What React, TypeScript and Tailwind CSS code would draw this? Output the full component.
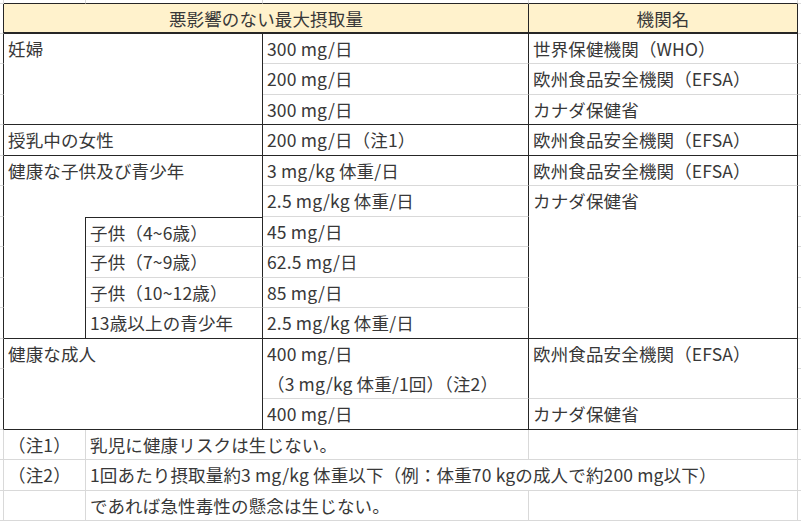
import React from "react";

const base =
  "border-r border-b border-[#d9d9d9] pl-1 leading-[30px] whitespace-nowrap overflow-visible";

const aRows = [
  "row-start-1",
  "row-start-2",
  "row-start-3",
  "row-start-4",
  "row-start-5",
  "row-start-6",
  "row-start-7",
  "row-start-8",
  "row-start-9",
  "row-start-10",
  "row-start-11",
  "row-start-12",
  "row-start-13",
  "row-start-14",
  "row-start-15",
  "row-start-16",
  "row-start-17",
  "row-start-18",
];

export default function App() {
  return (
    <div className="w-[801px] h-[522px] overflow-hidden bg-white text-[#383838] font-['Noto_Sans_CJK_JP','Noto_Sans',sans-serif] text-[17.5px] tracking-[0.15px]">
      <div className="grid grid-cols-[4px_82px_177px_266px_269px_1fr] grid-rows-[4px_30px_30px_31px_30px_31px_30px_31px_30px_31px_30px_31px_30px_30px_31px_30px_31px_30px]">
        {/* Column A */}
        {aRows.map((r, i) => (
          <div
            key={"a" + i}
            className={`col-start-1 ${r} border-r border-b border-[#d9d9d9] ${
              i >= 1 && i <= 14 ? "border-r-[#262626]" : ""
            }`}
          />
        ))}
        {/* Column F */}
        {aRows.map((r, i) => (
          <div key={"f" + i} className={`col-start-6 ${r} border-b border-[#d9d9d9]`} />
        ))}

        {/* Row 1 spacer */}
        <div className="col-start-2 row-start-1 border-r border-b border-[#d9d9d9] border-b-[#262626]" />
        <div className="col-start-3 row-start-1 border-r border-b border-[#d9d9d9] border-b-[#262626]" />
        <div className="col-start-4 row-start-1 border-r border-b border-[#d9d9d9] border-b-[#262626]" />
        <div className="col-start-5 row-start-1 border-r border-b border-[#d9d9d9] border-b-[#262626]" />

        {/* Header */}
        <div className="col-start-2 col-span-3 row-start-2 bg-[#fff2cc] border-r border-b-2 border-[#262626] text-center leading-[29px]">
          悪影響のない最大摂取量
        </div>
        <div className="col-start-5 row-start-2 bg-[#fff2cc] border-r border-b-2 border-[#262626] text-center leading-[29px]">
          機関名
        </div>

        {/* 妊婦 */}
        <div className={`col-start-2 col-span-2 row-start-3 row-span-3 ${base} border-r-[#262626] border-b-[#262626]`}>
          妊婦
        </div>
        <div className={`col-start-4 row-start-3 ${base} border-r-[#262626]`}>300 mg/日</div>
        <div className={`col-start-4 row-start-4 ${base} border-r-[#262626]`}>200 mg/日</div>
        <div className={`col-start-4 row-start-5 ${base} border-r-[#262626] border-b-[#262626]`}>300 mg/日</div>
        <div className={`col-start-5 row-start-3 ${base} border-r-[#262626]`}>世界保健機関（WHO）</div>
        <div className={`col-start-5 row-start-4 ${base} border-r-[#262626]`}>欧州食品安全機関（EFSA）</div>
        <div className={`col-start-5 row-start-5 ${base} border-r-[#262626] border-b-[#262626]`}>カナダ保健省</div>

        {/* 授乳中の女性 */}
        <div className={`col-start-2 col-span-2 row-start-6 ${base} border-r-[#262626] border-b-[#262626]`}>
          授乳中の女性
        </div>
        <div className={`col-start-4 row-start-6 ${base} border-r-[#262626] border-b-[#262626]`}>200 mg/日（注1）</div>
        <div className={`col-start-5 row-start-6 ${base} border-r-[#262626] border-b-[#262626]`}>欧州食品安全機関（EFSA）</div>

        {/* 健康な子供及び青少年 */}
        <div className={`col-start-2 col-span-2 row-start-7 row-span-2 ${base} border-r-[#262626] border-b-0`}>
          健康な子供及び青少年
        </div>
        <div className={`col-start-4 row-start-7 ${base} border-r-[#262626]`}>3 mg/kg 体重/日</div>
        <div className={`col-start-4 row-start-8 ${base} border-r-[#262626]`}>2.5 mg/kg 体重/日</div>
        <div className={`col-start-5 row-start-7 ${base} border-r-[#262626]`}>欧州食品安全機関（EFSA）</div>
        <div className={`col-start-5 row-start-8 row-span-5 ${base} border-r-[#262626] border-b-[#262626]`}>カナダ保健省</div>

        <div className="col-start-2 row-start-9 row-span-4 border-r border-b border-[#262626]" />
        <div className={`col-start-3 row-start-9 ${base} border-t border-t-[#262626] border-r-[#262626] leading-[29px]`}>子供（4~6歳）</div>
        <div className={`col-start-3 row-start-10 ${base} border-r-[#262626]`}>子供（7~9歳）</div>
        <div className={`col-start-3 row-start-11 ${base} border-r-[#262626]`}>子供（10~12歳）</div>
        <div className={`col-start-3 row-start-12 ${base} border-r-[#262626] border-b-[#262626]`}>13歳以上の青少年</div>
        <div className={`col-start-4 row-start-9 ${base} border-r-[#262626]`}>45 mg/日</div>
        <div className={`col-start-4 row-start-10 ${base} border-r-[#262626]`}>62.5 mg/日</div>
        <div className={`col-start-4 row-start-11 ${base} border-r-[#262626]`}>85 mg/日</div>
        <div className={`col-start-4 row-start-12 ${base} border-r-[#262626] border-b-[#262626]`}>2.5 mg/kg 体重/日</div>

        {/* 健康な成人 */}
        <div className={`col-start-2 col-span-2 row-start-13 row-span-3 ${base} border-r-[#262626] border-b-[#262626]`}>
          健康な成人
        </div>
        <div className={`col-start-4 row-start-13 row-span-2 ${base} border-r-[#262626]`}>
          <div>400 mg/日</div>
          <div>（3 mg/kg 体重/1回）（注2）</div>
        </div>
        <div className={`col-start-4 row-start-15 ${base} border-r-[#262626] border-b-[#262626]`}>400 mg/日</div>
        <div className={`col-start-5 row-start-13 row-span-2 ${base} border-r-[#262626]`}>欧州食品安全機関（EFSA）</div>
        <div className={`col-start-5 row-start-15 ${base} border-r-[#262626] border-b-[#262626]`}>カナダ保健省</div>

        {/* Notes */}
        <div className={`col-start-2 row-start-16 ${base}`}>（注1）</div>
        <div className={`col-start-3 col-span-2 row-start-16 ${base}`}>乳児に健康リスクは生じない。</div>
        <div className={`col-start-5 row-start-16 ${base}`} />
        <div className={`col-start-2 row-start-17 ${base}`}>（注2）</div>
        <div className={`col-start-3 col-span-3 row-start-17 ${base}`}>
          1回あたり摂取量約3 mg/kg 体重以下（例：体重70 kgの成人で約200 mg以下）
        </div>
        <div className={`col-start-2 row-start-18 ${base}`} />
        <div className={`col-start-3 col-span-2 row-start-18 ${base}`}>であれば急性毒性の懸念は生じない。</div>
        <div className={`col-start-5 row-start-18 ${base}`} />
      </div>
    </div>
  );
}
